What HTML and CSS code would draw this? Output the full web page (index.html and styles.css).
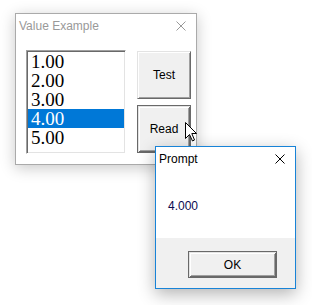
FILE: index.html
```html
<!DOCTYPE html>
<html lang="en">
<head>
    <meta charset="UTF-8">
    <meta name="viewport" content="width=device-width, initial-scale=1.0">
    <title>Value Example</title>
    <link rel="stylesheet" href="styles.css">
</head>
<body>
    <div class="desktop">
        <!-- Main dialog (inactive) -->
        <section class="window main-window">
            <div class="titlebar inactive">
                <span class="title">Value Example</span>
                <svg class="close" width="10" height="10" viewBox="0 0 10 10">
                    <path d="M0.5 0.5 L9.5 9.5 M9.5 0.5 L0.5 9.5" />
                </svg>
            </div>
            <div class="main-body">
                <ul class="listbox">
                    <li>1.00</li>
                    <li>2.00</li>
                    <li>3.00</li>
                    <li class="selected">4.00</li>
                    <li>5.00</li>
                </ul>
                <div class="buttons">
                    <button class="btn">Test</button>
                    <button class="btn default">Read</button>
                </div>
            </div>
        </section>

        <!-- Mouse pointer -->
        <svg class="cursor" width="13" height="20" viewBox="0 0 13 20">
            <path d="M0.5 0.5 L0.5 16.5 L4.5 12.5 L7.5 19 L9.5 18 L6.8 11.5 L11.5 11.5 Z" />
        </svg>

        <!-- Prompt dialog (active) -->
        <section class="window prompt-window">
            <div class="titlebar">
                <span class="title">Prompt</span>
                <svg class="close" width="10" height="10" viewBox="0 0 10 10">
                    <path d="M0.5 0.5 L9.5 9.5 M9.5 0.5 L0.5 9.5" />
                </svg>
            </div>
            <div class="prompt-body">
                <p class="message">4.000</p>
            </div>
            <div class="prompt-footer">
                <button class="btn default ok">OK</button>
            </div>
        </section>
    </div>
</body>
</html>
```
FILE: styles.css
```css
/* Global Styles */
body {
    margin: 0;
    background-color: #ffffff;
    font-family: 'Liberation Sans', Arial, sans-serif;
    font-size: 12px;
    color: #000000;
}

.desktop {
    position: relative;
    width: 312px;
    height: 305px;
    overflow: hidden;
}

/* Window frame */
.window {
    position: absolute;
    box-sizing: border-box;
    background-color: #ffffff;
    display: flex;
    flex-direction: column;
}

.titlebar {
    height: 24px;
    display: flex;
    align-items: center;
    justify-content: space-between;
    padding: 0 10px 0 3px;
}

.title {
    font-size: 12px;
    color: #000000;
}

.close path {
    stroke: #000000;
    stroke-width: 1;
    fill: none;
}

.titlebar.inactive .title {
    color: #999999;
}

.titlebar.inactive .close path {
    stroke: #999999;
}

/* Main dialog */
.main-window {
    left: 15px;
    top: 13px;
    width: 182px;
    height: 152px;
    border: 1px solid #aaaaaa;
    box-shadow: 0 3px 14px rgba(0, 0, 0, 0.22);
}

.main-body {
    display: flex;
    gap: 11px;
    padding: 12px 5px 10px 10px;
}

.listbox {
    list-style: none;
    margin: 0;
    padding: 0;
    width: 100px;
    height: 104px;
    box-sizing: border-box;
    border: 1px solid;
    border-color: #a0a0a0 #ffffff #ffffff #a0a0a0;
    box-shadow: inset 1px 1px #696969, inset -1px -1px #e3e3e3;
    padding: 1px;
    font-family: 'Liberation Serif', 'Times New Roman', serif;
    font-size: 19px;
    line-height: 19px;
}

.listbox li {
    height: 19px;
    padding-left: 3px;
}

.listbox li.selected {
    background-color: #0078d7;
    color: #ffffff;
}

.buttons {
    display: flex;
    flex-direction: column;
    gap: 6px;
    padding-top: 1px;
}

/* Buttons */
.btn {
    width: 54px;
    height: 48px;
    box-sizing: border-box;
    padding: 0;
    font-family: 'Liberation Sans', Arial, sans-serif;
    font-size: 12px;
    color: #000000;
    background-color: #f0f0f0;
    border: 1px solid;
    border-color: #e3e3e3 #696969 #696969 #e3e3e3;
    box-shadow: inset 1px 1px #ffffff, inset -1px -1px #a0a0a0;
}

.btn.default {
    border-color: #696969;
    box-shadow: inset 1px 1px #e3e3e3, inset -1px -1px #696969, inset 2px 2px #ffffff, inset -2px -2px #a0a0a0;
}

/* Pointer */
.cursor {
    position: absolute;
    left: 185px;
    top: 122px;
}

.cursor path {
    fill: #ffffff;
    stroke: #000000;
    stroke-width: 1;
    stroke-linejoin: miter;
}

/* Prompt dialog */
.prompt-window {
    left: 155px;
    top: 146px;
    width: 141px;
    height: 143px;
    border: 1px solid #1883d7;
    box-shadow: 0 5px 16px rgba(0, 0, 0, 0.3);
}

.prompt-body {
    height: 67px;
    box-sizing: border-box;
    padding: 27px 12px 0;
}

.message {
    margin: 0;
    line-height: 16px;
    color: #0a0a50;
}

.prompt-footer {
    height: 50px;
    box-sizing: border-box;
    background-color: #f0f0f0;
    display: flex;
    justify-content: flex-end;
    align-items: flex-start;
    padding: 13px 18px 0 0;
}

.btn.ok {
    width: 89px;
    height: 27px;
}
```
